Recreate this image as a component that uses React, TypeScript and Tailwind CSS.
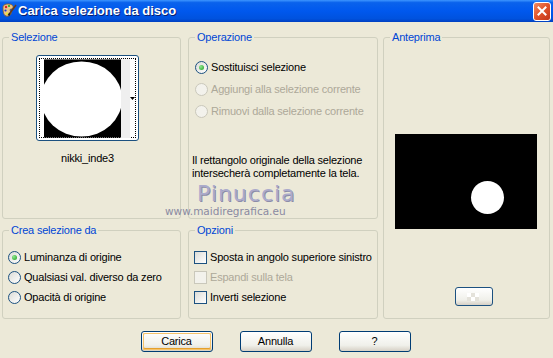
import type { ReactNode } from "react";

const FONT = { fontFamily: '"Liberation Sans", Arial, sans-serif' };

function Radio({ checked, disabled }: { checked?: boolean; disabled?: boolean }) {
  return (
    <span
      className={
        disabled
          ? "flex h-[13px] w-[13px] shrink-0 items-center justify-center rounded-full border border-[#CAC8BB] bg-[#F3F2EC]"
          : "flex h-[13px] w-[13px] shrink-0 items-center justify-center rounded-full border border-[#1C5180] bg-[linear-gradient(135deg,#DCDCD7,#FFFFFF)]"
      }
    >
      {checked && (
        <span className="h-[5px] w-[5px] rounded-full bg-[radial-gradient(circle_at_35%_35%,#8FE68F,#1FA01F)]" />
      )}
    </span>
  );
}

function Check({ disabled }: { disabled?: boolean }) {
  return (
    <span
      className={
        disabled
          ? "h-[13px] w-[13px] shrink-0 border border-[#CAC8BB] bg-[#F3F2EC]"
          : "h-[13px] w-[13px] shrink-0 border border-[#1C5180] bg-[linear-gradient(135deg,#DCDCD7,#FFFFFF)]"
      }
    />
  );
}

function Group({
  title,
  className,
  children,
}: {
  title: string;
  className: string;
  children: ReactNode;
}) {
  return (
    <fieldset className={`m-0 min-w-0 rounded-[3px] border border-[#D0D0BF] p-0 ${className}`}>
      <legend className="ml-[6px] px-[2px] text-[11px] leading-[14px] tracking-[-0.2px] text-[#0046D5]">
        {title}
      </legend>
      {children}
    </fieldset>
  );
}

function Row({ children, disabled }: { children: ReactNode; disabled?: boolean }) {
  return (
    <div
      className={
        disabled
          ? "flex h-[20px] items-center gap-[3px] text-[#ACA899]"
          : "flex h-[20px] items-center gap-[3px] text-black"
      }
    >
      {children}
    </div>
  );
}

function XpButton({ label, def }: { label: string; def?: boolean }) {
  return (
    <div className="h-[21px] w-[72px] rounded-[3px] border border-[#003C74] bg-[linear-gradient(to_bottom,#FFFFFF,#F0F0EA_70%,#D6D0C5)] p-[1px]">
      <div
        className={
          def
            ? "flex h-full w-full items-center justify-center rounded-[2px] shadow-[inset_0_0_0_1px_#F5C26A,inset_0_-1px_0_1px_#E5A02C]"
            : "flex h-full w-full items-center justify-center"
        }
      >
        {label}
      </div>
    </div>
  );
}

function AppIcon() {
  return (
    <svg width="16" height="16" viewBox="0 0 16 16">
      <path d="M2 4 C2 1 8 0 11 2 C13 3.5 12 6 10 6 C8.5 6 9 8 10 9 C11 11 8 14 5 13 C2 12 2 7 2 4Z" fill="#E9C58A" stroke="#8A5A22" strokeWidth="0.8" />
      <circle cx="5" cy="4" r="1.2" fill="#D22" />
      <circle cx="8" cy="3" r="1.1" fill="#2A2" />
      <circle cx="4.5" cy="7.5" r="1.1" fill="#23C" />
      <circle cx="6" cy="10.5" r="1.1" fill="#EE2" />
      <path d="M15 2 L9 10" stroke="#6B3B12" strokeWidth="1.6" />
      <path d="M9 10 L7.5 12.5" stroke="#222" strokeWidth="2" />
    </svg>
  );
}

export default function App() {
  return (
    <div className="h-[358px] w-[553px] overflow-hidden bg-[#ECE9D8] text-[11px] tracking-[-0.2px] text-black" style={FONT}>
      {/* Title bar */}
      <div className="flex h-[22px] items-center bg-[linear-gradient(to_bottom,#3D95FF_0%,#0A62EC_12%,#0058EE_50%,#0052DE_85%,#003FC0_100%)] pl-[1px] pr-[2px]">
        <AppIcon />
        <span className="ml-[1px] flex-1 text-[13px] font-bold tracking-normal text-white [text-shadow:1px_1px_0_#0A1E6E]">
          Carica selezione da disco
        </span>
        <div className="flex h-[19px] w-[18px] items-center justify-center rounded-[3px] border border-white bg-[linear-gradient(135deg,#F08A63,#E0532A_50%,#C2361A)]">
          <svg width="10" height="10" viewBox="0 0 10 10">
            <path d="M1.5 1.5 L8.5 8.5 M8.5 1.5 L1.5 8.5" stroke="white" strokeWidth="2" strokeLinecap="square" />
          </svg>
        </div>
      </div>

      {/* Body */}
      <div className="relative pl-[2px] pt-[8px]">
        <div className="grid grid-cols-[186px_195px_167px] grid-rows-[189px_96px] gap-y-[4px]">
          <Group title="Selezione" className="w-[179px]">
            <div className="ml-[33px] mt-[11px] flex w-[103px] flex-col items-center">
              <div className="h-[86px] w-[103px] rounded-[3px] border border-[#1C5180] bg-white p-[2px]">
                <div className="flex h-full w-full border border-dotted border-black pl-[4px]">
                  <svg width="78" height="79" viewBox="0 0 78 79" className="block">
                    <rect width="78" height="79" fill="#000" />
                    <ellipse cx="38" cy="40" rx="41" ry="38" fill="#fff" />
                  </svg>
                  <div className="h-[79px] w-[9px] bg-[#EFEFEF]" />
                  <div className="flex flex-1 items-center justify-center">
                    <svg width="5" height="3" viewBox="0 0 5 3">
                      <path d="M0 0 H5 L2.5 3Z" fill="#000" />
                    </svg>
                  </div>
                </div>
              </div>
              <div className="mt-[9px]">nikki_inde3</div>
            </div>
          </Group>

          <Group title="Operazione" className="w-[190px]">
            <div className="pl-[6px] pt-[12px]">
              <div className="flex h-[22px] items-center gap-[3px]">
                <Radio checked />
                <span>Sostituisci selezione</span>
              </div>
              <div className="flex h-[22px] items-center gap-[3px] text-[#ACA899]">
                <Radio disabled />
                <span>Aggiungi alla selezione corrente</span>
              </div>
              <div className="flex h-[22px] items-center gap-[3px] text-[#ACA899]">
                <Radio disabled />
                <span>Rimuovi dalla selezione corrente</span>
              </div>
            </div>
            <p className="ml-[3px] mt-[32px] leading-[13px]">
              Il rettangolo originale della selezione
              <br />
              intersecherà completamente la tela.
            </p>
          </Group>

          <Group title="Anteprima" className="row-span-2 w-[167px]">
            <div className="pl-[11px] pt-[90px]">
              <svg width="142" height="95" viewBox="0 0 142 95" className="block">
                <rect width="142" height="95" fill="#000" />
                <circle cx="92.5" cy="63.5" r="16.5" fill="#fff" />
              </svg>
              <div className="ml-[60px] mt-[58px] flex h-[19px] w-[38px] items-center justify-center rounded-[3px] border border-[#1C5180] bg-[linear-gradient(to_bottom,#FFFFFF,#F0F0EA_70%,#D6D0C5)]">
                <svg width="14" height="8" viewBox="0 0 14 8">
                  <rect x="0" y="0" width="4" height="4" fill="#FFFFFF" />
                  <rect x="4" y="4" width="4" height="4" fill="#FFFFFF" />
                  <rect x="8" y="0" width="4" height="4" fill="#FFFFFF" />
                  <rect x="4" y="0" width="4" height="4" fill="#E4E2DA" />
                  <rect x="0" y="4" width="4" height="4" fill="#E4E2DA" />
                  <rect x="8" y="4" width="4" height="4" fill="#E4E2DA" />
                </svg>
              </div>
            </div>
          </Group>

          <Group title="Crea selezione da" className="w-[179px]">
            <div className="pl-[5px] pt-[10px]">
              <Row>
                <Radio checked />
                <span>Luminanza di origine</span>
              </Row>
              <Row>
                <Radio />
                <span>Qualsiasi val. diverso da zero</span>
              </Row>
              <Row>
                <Radio />
                <span>Opacità di origine</span>
              </Row>
            </div>
          </Group>

          <Group title="Opzioni" className="w-[190px]">
            <div className="pl-[5px] pt-[10px]">
              <Row>
                <Check />
                <span>Sposta in angolo superiore sinistro</span>
              </Row>
              <Row disabled>
                <Check disabled />
                <span>Espandi sulla tela</span>
              </Row>
              <Row>
                <Check />
                <span>Inverti selezione</span>
              </Row>
            </div>
          </Group>
        </div>

        {/* Buttons */}
        <div className="mt-[12px] flex justify-center gap-[27px] pr-[4px]">
          <XpButton label="Carica" def />
          <XpButton label="Annulla" />
          <XpButton label="?" />
        </div>

        {/* Watermark */}
        <div className="pointer-events-none absolute left-[197px] top-[159px] text-[22px] leading-[26px] tracking-[1px] text-[#ABABCB] [text-shadow:1px_1px_0_#8C8CA8]" style={{ fontFamily: '"DejaVu Sans", sans-serif' }}>
          Pinuccia
        </div>
        <div className="pointer-events-none absolute left-[165px] top-[183px] text-[10.5px] leading-[12px] tracking-normal text-[#8A8AA2]" style={{ fontFamily: '"DejaVu Sans", sans-serif' }}>
          www.maidiregrafica.eu
        </div>
      </div>
    </div>
  );
}
